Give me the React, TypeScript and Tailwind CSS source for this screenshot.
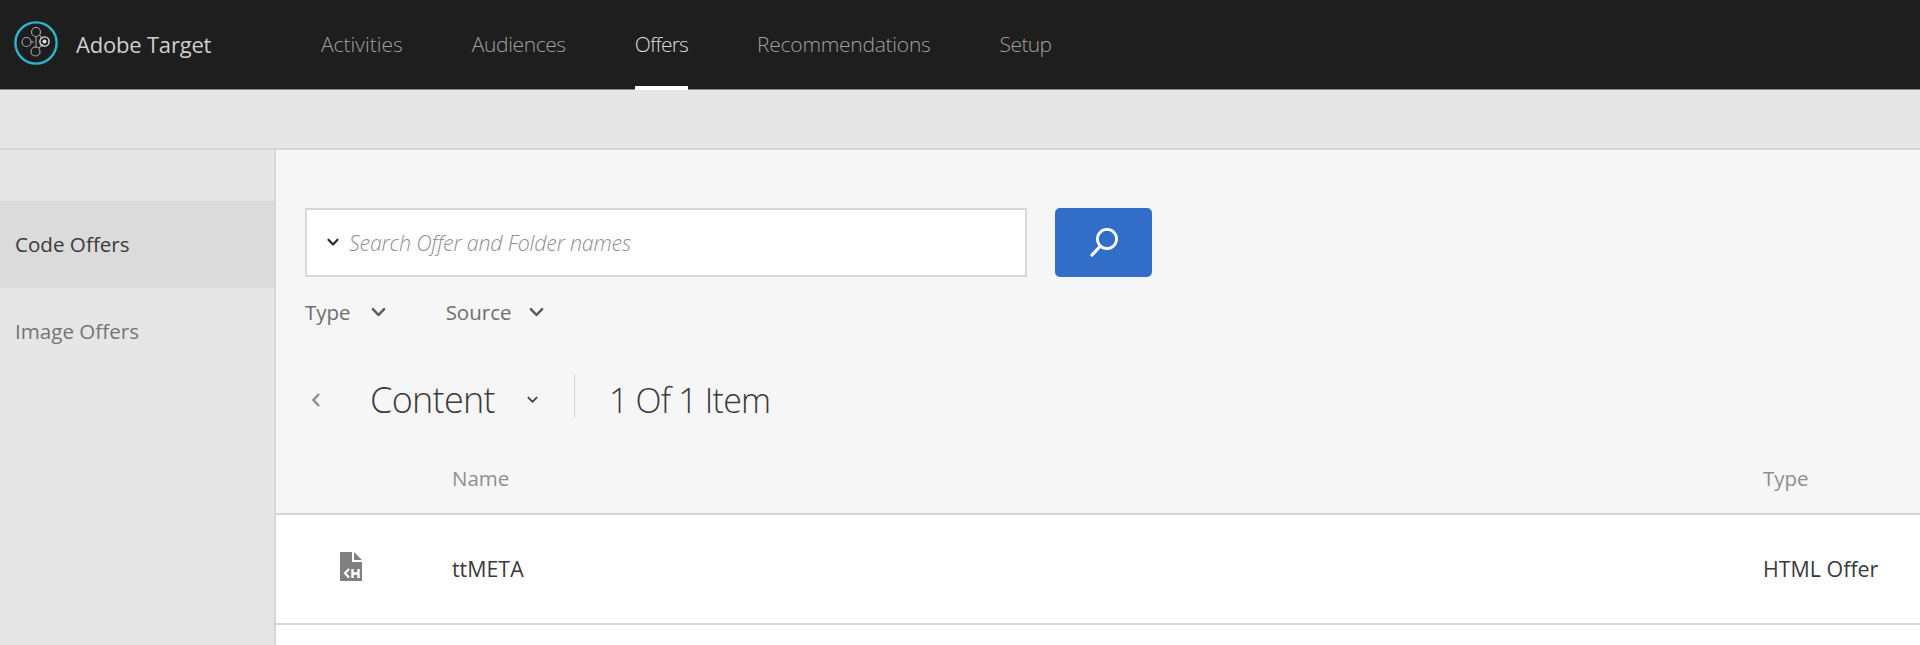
import React from "react";

const font = { fontFamily: '"Open Sans", "Noto Sans", sans-serif' };

function Logo() {
  return (
    <svg width="44" height="44" viewBox="0 0 44 44" fill="none" className="shrink-0 mb-[3px]">
      <circle cx="22" cy="22" r="20.6" stroke="#2fb4d0" strokeWidth="2.4" />
      <g stroke="#a8a8a8" strokeWidth="1.1">
        <circle cx="22" cy="11" r="4.5" />
        <circle cx="12.5" cy="21" r="4.5" />
        <circle cx="21.5" cy="30.5" r="4.5" />
        <path d="M17 21h3M22 15.5v11M25 27l4-4M25.5 14l3 4" />
      </g>
      <circle cx="30.5" cy="20.5" r="4.6" stroke="#d6e4ea" strokeWidth="1.4" />
      <circle cx="30.5" cy="20.5" r="2" fill="#d6e4ea" />
    </svg>
  );
}

function Chevron({ w = 12, color = "#333", sw = 2 }: { w?: number; color?: string; sw?: number }) {
  return (
    <svg width={w} height={w * 0.7} viewBox="0 0 12 8" fill="none" className="shrink-0">
      <path d="M1.5 1.5 6 6.2l4.5-4.7" stroke={color} strokeWidth={sw} strokeLinecap="round" strokeLinejoin="round" />
    </svg>
  );
}

function FileIcon() {
  return (
    <svg width="22" height="29" viewBox="0 0 22 29" className="block mb-[5px]">
      <path d="M0 0h12v10h10v19H0z" fill="#808080" />
      <path d="M14 0l8 8h-8z" fill="#808080" />
      <path d="M9 17 5 21.3 9 25.6" stroke="#fff" strokeWidth="2.2" fill="none" />
      <path d="M12.5 17v9M18.5 17v9M12.5 21.5h6" stroke="#fff" strokeWidth="2.4" fill="none" />
    </svg>
  );
}

const nav = [
  { label: "Activities", cls: "tracking-[0px] text-[#a0a0a0] border-transparent" },
  { label: "Audiences", cls: "tracking-[-0.4px] text-[#a0a0a0] border-transparent" },
  { label: "Offers", cls: "tracking-[-0.8px] text-[#dcdcdc] border-white" },
  { label: "Recommendations", cls: "tracking-[-0.25px] text-[#a0a0a0] border-transparent" },
  { label: "Setup", cls: "tracking-[-0.6px] text-[#a0a0a0] border-transparent" },
];

export default function App() {
  return (
    <div className="h-[645px] w-[1920px] overflow-hidden flex flex-col bg-[#e6e6e6]" style={font}>
      <header className="h-[90px] shrink-0 bg-[#1e1e1e] flex items-center border-b border-[#8a8a8a]">
        <div className="flex items-center w-[321px] pl-[14px] gap-[18px] shrink-0">
          <Logo />
          <span className="text-[22px] text-[#cfcfcf] whitespace-nowrap tracking-[-0.2px]">Adobe Target</span>
        </div>
        <nav className="flex h-full gap-[69px]">
          {nav.map((n) => (
            <div
              key={n.label}
              className={"h-[90px] flex items-center pt-[3px] text-[21px] font-light border-b-[4px] " + n.cls}
            >
              {n.label}
            </div>
          ))}
        </nav>
      </header>

      <div className="h-[60px] shrink-0 bg-[#e6e6e6] border-b-2 border-[#d6d6d6]" />

      <div className="flex-1 flex min-h-0">
        <aside className="w-[276px] shrink-0 bg-[#e6e6e6] border-r-2 border-[#d6d6d6] pt-[51px]">
          <div className="h-[87px] bg-[#dbdbdb] flex items-center pl-[15px] text-[20.6px] text-[#3a3a3a]">Code Offers</div>
          <div className="h-[87px] flex items-center pl-[15px] text-[20.6px] text-[#757575]">Image Offers</div>
        </aside>

        <main className="flex-1 min-w-0 flex flex-col bg-[#f6f6f6]">
          <div className="pl-[29px] pt-[58px] flex items-center gap-[28px]">
            <div className="w-[722px] h-[69px] bg-white border-2 border-[#d8d8d8] flex items-center pl-[20px] gap-[10px]">
              <Chevron w={12} color="#2c2c2c" sw={2.2} />
              <span className="pt-[1px] text-[21.4px] italic font-light text-[#8f8f8f] tracking-[-0.2px]">Search Offer and Folder names</span>
            </div>
            <button className="w-[97px] h-[69px] rounded-[5px] bg-[#326ec8] flex items-center justify-center">
              <svg width="31" height="31" viewBox="0 0 31 31" fill="none">
                <circle cx="19" cy="12" r="9.6" stroke="#fff" strokeWidth="2.8" />
                <path d="M12 19.5 4 28" stroke="#fff" strokeWidth="3.2" strokeLinecap="round" />
              </svg>
            </button>
          </div>

          <div className="pl-[29px] mt-[20px] h-[31px] flex items-center text-[20.5px] text-[#6e6e6e]">
            <span>Type</span>
            <span className="ml-[20px]"><Chevron w={15} color="#5a5a5a" /></span>
            <span className="ml-[60px]">Source</span>
            <span className="ml-[18px]"><Chevron w={15} color="#5a5a5a" /></span>
          </div>

          <div className="pl-[35px] mt-[50px] h-[44px] flex items-center">
            <svg width="10" height="16" viewBox="0 0 10 16" fill="none" className="shrink-0">
              <path d="M8 2 2.5 8 8 14" stroke="#8c8c8c" strokeWidth="2.4" />
            </svg>
            <span className="ml-[49px] text-[36px] font-light text-[#3a3a3a] tracking-[-0.7px]">Content</span>
            <span className="ml-[32px]"><Chevron w={11} color="#444" /></span>
            <div className="ml-[36px] mb-[9px] w-px h-[44px] bg-[#d6d6d6]" />
            <span className="ml-[34px] text-[34px] font-light text-[#3a3a3a] tracking-[-0.8px]">1 Of 1 Item</span>
          </div>

          <div className="mt-[38px] h-[55px] flex items-center border-b-2 border-[#d6d6d6] pl-[176px] pb-[16px] text-[20.5px] text-[#8f8f8f]">
            <span className="w-[1311px] shrink-0">Name</span>
            <span>Type</span>
          </div>

          <div className="h-[110px] bg-white flex items-center border-b-2 border-[#d6d6d6] text-[21.4px] text-[#3a3a3a]">
            <span className="w-[176px] shrink-0 pl-[64px]"><FileIcon /></span>
            <span className="w-[1311px] shrink-0">ttMETA</span>
            <span className="whitespace-nowrap">HTML Offer</span>
          </div>
          <div className="flex-1 bg-white" />
        </main>
      </div>
    </div>
  );
}
